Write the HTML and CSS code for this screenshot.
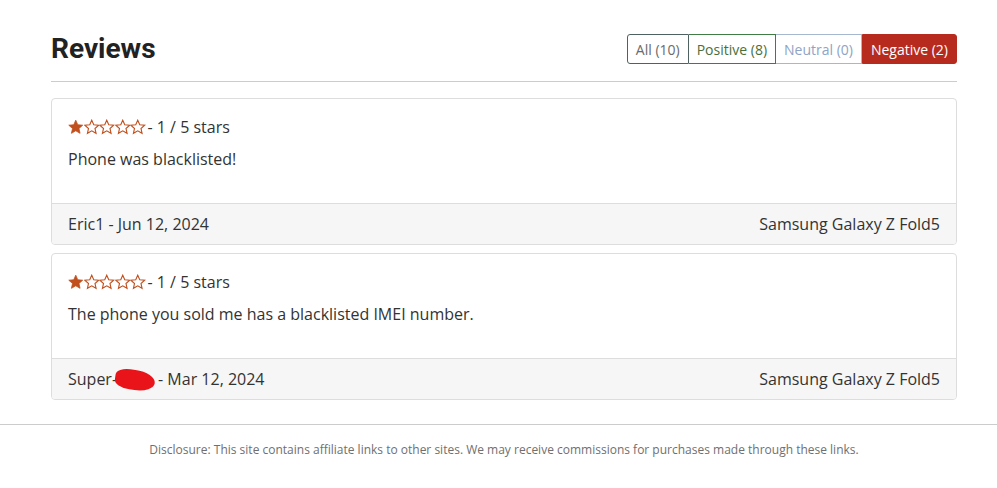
FILE: index.html
```html
<!DOCTYPE html>
<html>
<head>
<meta charset="utf-8">
<link rel="stylesheet" href="styles.css">
</head>
<body>
<div class="container">
  <div class="header">
    <h1 class="title">Reviews</h1>
    <div class="filters">
      <span class="btn btn-all">All (10)</span>
      <span class="btn btn-pos">Positive (8)</span>
      <span class="btn btn-neu">Neutral (0)</span>
      <span class="btn btn-neg">Negative (2)</span>
    </div>
  </div>
  <div class="reviews">
    <div class="card">
      <div class="card-body">
        <div class="rating">
          <span class="stars">
            <svg class="star" viewBox="0 0 24 24"><path class="full" d="M12 1.8l3.1 7.1 7.7.7-5.8 5.1 1.7 7.5L12 18.3l-6.7 3.9 1.7-7.5-5.8-5.1 7.7-.7z"/></svg><svg class="star" viewBox="0 0 24 24"><path class="empty" d="M12 1.8l3.1 7.1 7.7.7-5.8 5.1 1.7 7.5L12 18.3l-6.7 3.9 1.7-7.5-5.8-5.1 7.7-.7z"/></svg><svg class="star" viewBox="0 0 24 24"><path class="empty" d="M12 1.8l3.1 7.1 7.7.7-5.8 5.1 1.7 7.5L12 18.3l-6.7 3.9 1.7-7.5-5.8-5.1 7.7-.7z"/></svg><svg class="star" viewBox="0 0 24 24"><path class="empty" d="M12 1.8l3.1 7.1 7.7.7-5.8 5.1 1.7 7.5L12 18.3l-6.7 3.9 1.7-7.5-5.8-5.1 7.7-.7z"/></svg><svg class="star" viewBox="0 0 24 24"><path class="empty" d="M12 1.8l3.1 7.1 7.7.7-5.8 5.1 1.7 7.5L12 18.3l-6.7 3.9 1.7-7.5-5.8-5.1 7.7-.7z"/></svg>
          </span>- 1 / 5 stars
        </div>
        <p class="text">Phone was blacklisted!</p>
      </div>
      <div class="card-footer">
        <span>Eric1 - Jun 12, 2024</span>
        <span>Samsung Galaxy Z Fold5</span>
      </div>
    </div>
    <div class="card">
      <div class="card-body">
        <div class="rating">
          <span class="stars">
            <svg class="star" viewBox="0 0 24 24"><path class="full" d="M12 1.8l3.1 7.1 7.7.7-5.8 5.1 1.7 7.5L12 18.3l-6.7 3.9 1.7-7.5-5.8-5.1 7.7-.7z"/></svg><svg class="star" viewBox="0 0 24 24"><path class="empty" d="M12 1.8l3.1 7.1 7.7.7-5.8 5.1 1.7 7.5L12 18.3l-6.7 3.9 1.7-7.5-5.8-5.1 7.7-.7z"/></svg><svg class="star" viewBox="0 0 24 24"><path class="empty" d="M12 1.8l3.1 7.1 7.7.7-5.8 5.1 1.7 7.5L12 18.3l-6.7 3.9 1.7-7.5-5.8-5.1 7.7-.7z"/></svg><svg class="star" viewBox="0 0 24 24"><path class="empty" d="M12 1.8l3.1 7.1 7.7.7-5.8 5.1 1.7 7.5L12 18.3l-6.7 3.9 1.7-7.5-5.8-5.1 7.7-.7z"/></svg><svg class="star" viewBox="0 0 24 24"><path class="empty" d="M12 1.8l3.1 7.1 7.7.7-5.8 5.1 1.7 7.5L12 18.3l-6.7 3.9 1.7-7.5-5.8-5.1 7.7-.7z"/></svg>
          </span>- 1 / 5 stars
        </div>
        <p class="text">The phone you sold me has a blacklisted IMEI number.</p>
      </div>
      <div class="card-footer">
        <span>Super-<span class="redact"></span>- Mar 12, 2024</span>
        <span>Samsung Galaxy Z Fold5</span>
      </div>
    </div>
  </div>
</div>
<footer class="site-footer">
  <p class="disclosure">Disclosure: This site contains affiliate links to other sites. We may receive commissions for purchases made through these links.</p>
</footer>
</body>
</html>
```

FILE: styles.css
```css
html, body {
  margin: 0;
  padding: 0;
  background: #fff;
}
body {
  font-family: "Open Sans", "Liberation Sans", sans-serif;
  color: #333;
}
.container {
  width: 906px;
  margin-left: 51px;
  padding-top: 34px;
}
.header {
  display: flex;
  justify-content: space-between;
  align-items: center;
  padding-bottom: 17px;
  border-bottom: 1px solid #cccccc;
}
.title {
  margin: 0;
  font-family: Roboto, "Liberation Sans", sans-serif;
  font-weight: 700;
  font-size: 28px;
  line-height: 30px;
  color: #222;
}
.filters {
  display: flex;
}
.btn {
  display: flex;
  align-items: center;
  height: 28px;
  padding: 0 8px;
  font-size: 14px;
  border: 1px solid;
  background: #fff;
}
.btn-all {
  color: #6b6b6b;
  border-color: #4f6262;
  border-radius: 3px 0 0 3px;
}
.btn-pos {
  color: #4a6f3c;
  border-color: #3f7d45;
  border-left: none;
}
.btn-neu {
  color: #8ea4c6;
  border-color: #a5b8d0;
  border-left: none;
}
.btn-neg {
  color: #fff;
  background: #b72b1f;
  border-color: #b72b1f;
  border-radius: 0 3px 3px 0;
}
.reviews {
  display: flex;
  flex-direction: column;
  gap: 8px;
  margin-top: 16px;
}
.card {
  border: 1px solid #dddddd;
  border-radius: 4px;
  overflow: hidden;
}
.card-body {
  padding: 16px 16px 0 16px;
}
.rating {
  display: flex;
  align-items: center;
  font-size: 16px;
  line-height: 24px;
}
.stars {
  display: inline-flex;
  margin-right: 2px;
}
.star {
  width: 15.5px;
  height: 15.5px;
  display: block;
}
.star .full {
  fill: #c0501e;
  stroke: #c0501e;
  stroke-width: 1.2;
  stroke-linejoin: round;
}
.star .empty {
  fill: none;
  stroke: #c0501e;
  stroke-width: 1.7;
  stroke-linejoin: miter;
}
.text {
  margin: 8px 0 32px 0;
  font-size: 16px;
  line-height: 24px;
}
.card-footer {
  display: flex;
  justify-content: space-between;
  padding: 8px 16px;
  font-size: 16px;
  line-height: 24px;
  background: #f6f6f6;
  border-top: 1px solid #dddddd;
}
.redact {
  display: inline-block;
  width: 40px;
  height: 20px;
  background: #e8141a;
  border-radius: 40% 60% 55% 45%;
  vertical-align: -5px;
  transform: rotate(8deg);
  margin: 0 3px 0 -2px;
}
.site-footer {
  margin-top: 24px;
  border-top: 1px solid #cccccc;
}
.disclosure {
  width: 906px;
  margin: 0 0 0 51px;
  padding-top: 17px;
  text-align: center;
  font-size: 12px;
  line-height: 16px;
  color: #6f6f6f;
}
```
